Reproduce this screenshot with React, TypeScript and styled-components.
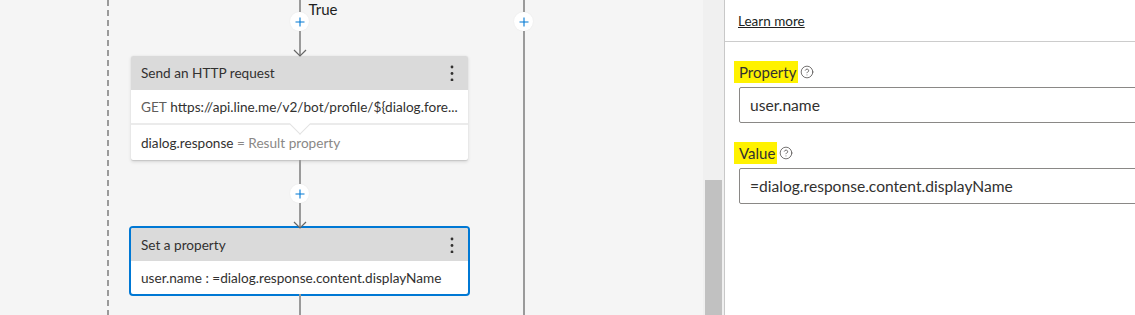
import styled, { createGlobalStyle } from 'styled-components';
import { CircleHelp } from 'lucide-react';

const GlobalStyle = createGlobalStyle`
  html, body {
    margin: 0;
    padding: 0;
  }
  body {
    font-family: Lato, "Open Sans", sans-serif;
    background: #f5f5f5;
    color: #323130;
  }
`;

const LINE = '#9a9a9a';

const Page = styled.div`
  display: flex;
  width: 1135px;
  height: 315px;
  overflow: hidden;
`;

const Canvas = styled.div`
  display: flex;
  flex: none;
  width: 703px;
  height: 100%;
  background: #f5f5f5;
`;

const DashedRail = styled.div`
  flex: none;
  width: 2px;
  margin-left: 107px;
  height: 100%;
  background: repeating-linear-gradient(to bottom, ${LINE} 0 6px, transparent 6px 10px);
`;

const Branch = styled.div<{ $width: number; $offset: number }>`
  display: flex;
  flex-direction: column;
  align-items: center;
  flex: none;
  width: ${p => p.$width}px;
  margin-left: ${p => p.$offset}px;
  height: 100%;
`;

const Segment = styled.div<{ $h?: number }>`
  position: relative;
  width: 2px;
  background: ${LINE};
  flex: ${p => (p.$h ? `0 0 ${p.$h}px` : '1 1 auto')};
`;

const ArrowHead = styled.svg`
  position: absolute;
  left: -6px;
  bottom: -1px;
`;

const BranchLabel = styled.span`
  position: absolute;
  left: 10px;
  top: 2px;
  font-size: 15px;
  line-height: 15px;
  color: #201f1e;
  white-space: nowrap;
`;

const AddButton = styled.div`
  flex: none;
  width: 19px;
  height: 19px;
  border-radius: 50%;
  background: #ffffff;
  display: flex;
  align-items: center;
  justify-content: center;
  box-shadow: 0 0 2px rgba(0, 0, 0, 0.06);
`;

const Card = styled.div<{ $selected?: boolean }>`
  flex: none;
  width: 337px;
  background: #ffffff;
  border-radius: 2px;
  box-shadow: ${p =>
    p.$selected
      ? '0 0 0 2px #0078d4'
      : '0 1.6px 3.6px rgba(0, 0, 0, 0.12), 0 0.3px 0.9px rgba(0, 0, 0, 0.1)'};
`;

const CardHeader = styled.div<{ $h: number }>`
  display: flex;
  align-items: center;
  justify-content: space-between;
  height: ${p => p.$h}px;
  padding: 0 14px 0 10px;
  background: #dadada;
  border-radius: 2px 2px 0 0;
  font-size: 13.6px;
  color: #323130;
`;

const CardRow = styled.div<{ $h: number }>`
  display: flex;
  align-items: center;
  height: ${p => p.$h}px;
  padding: 0 10px;
  font-size: 13.6px;
  white-space: nowrap;
  overflow: hidden;
  color: #323130;
`;

const Muted = styled.span<{ $tone?: string }>`
  color: ${p => p.$tone ?? '#605e5c'};
`;

const RowDivider = styled.div`
  position: relative;
  height: 2px;
  background: #ebebeb;

  &::after {
    content: '';
    position: absolute;
    left: 50%;
    top: -7px;
    width: 15px;
    height: 15px;
    margin-left: -8px;
    background: #ffffff;
    border-right: 1px solid #e2e2e2;
    border-bottom: 1px solid #e2e2e2;
    transform: rotate(45deg) scale(0.95);
  }
`;

const ScrollTrack = styled.div`
  flex: none;
  display: flex;
  flex-direction: column;
  width: 21px;
  padding: 180px 2px 0 2px;
  box-sizing: border-box;
  background: #f0f0f0;
`;

const ScrollThumb = styled.div`
  flex: 1;
  background: #c1c1c1;
`;

const Panel = styled.div`
  flex: 1;
  display: flex;
  flex-direction: column;
  min-width: 0;
  background: #ffffff;
  border-left: 1px solid #c8c8c8;
  overflow: hidden;
`;

const PanelTop = styled.div`
  flex: none;
  display: flex;
  align-items: center;
  height: 41px;
  padding-left: 13px;
  border-bottom: 1px solid #cccccc;
`;

const LearnMore = styled.a`
  font-size: 13.5px;
  color: #201f1e;
  text-decoration: underline;
`;

const Form = styled.div`
  display: flex;
  flex-direction: column;
  gap: 19px;
  padding: 19px 0 0 14px;
`;

const Field = styled.div`
  display: flex;
  flex-direction: column;
`;

const FieldLabel = styled.div`
  display: flex;
  align-items: center;
  height: 22px;
  margin-bottom: 4px;
  font-size: 15px;
  color: #323130;
`;

const Highlight = styled.span`
  background: #fff200;
  line-height: 22px;
  padding: 0 2px 0 5px;
  margin-left: -5px;
`;

const HelpIcon = styled(CircleHelp)`
  margin-left: 2px;
  color: #4a4846;
`;

const TextInput = styled.input`
  box-sizing: border-box;
  width: 430px;
  height: 36px;
  padding: 0 10px;
  border: 1px solid #8a8886;
  border-radius: 2px;
  background: #ffffff;
  font-family: inherit;
  font-size: 15.6px;
  color: #323130;
  outline: none;
`;

function Arrow() {
  return (
    <ArrowHead width="14" height="8" viewBox="0 0 14 8">
      <path d="M1 1 L7 7 L13 1" fill="none" stroke="#666666" strokeWidth="1.2" />
    </ArrowHead>
  );
}

function Add() {
  return (
    <AddButton>
      <svg width="10" height="10" viewBox="0 0 10 10">
        <path d="M5 0.5 V9.5 M0.5 5 H9.5" stroke="#0078d4" strokeWidth="1.1" />
      </svg>
    </AddButton>
  );
}

function Kebab() {
  return (
    <svg width="4" height="16" viewBox="0 0 4 16">
      <circle cx="2" cy="2" r="1.4" fill="#323130" />
      <circle cx="2" cy="8.5" r="1.4" fill="#323130" />
      <circle cx="2" cy="15" r="1.4" fill="#323130" />
    </svg>
  );
}

function Property({ label, value }: { label: string; value: string }) {
  return (
    <Field>
      <FieldLabel>
        <Highlight>{label}</Highlight>
        <HelpIcon size={14} strokeWidth={1.3} />
      </FieldLabel>
      <TextInput readOnly defaultValue={value} />
    </Field>
  );
}

export default function App() {
  return (
    <>
      <GlobalStyle />
      <Page>
        <Canvas>
          <DashedRail />
          <Branch $width={337} $offset={22}>
            <Segment $h={12}>
              <BranchLabel>True</BranchLabel>
            </Segment>
            <Add />
            <Segment $h={25}>
              <Arrow />
            </Segment>
            <Card>
              <CardHeader $h={34}>
                Send an HTTP request
                <Kebab />
              </CardHeader>
              <CardRow $h={33}>
                <Muted>GET</Muted>&nbsp;https://api.line.me/v2/bot/profile/${'{'}dialog.fore...
              </CardRow>
              <RowDivider />
              <CardRow $h={35}>
                dialog.response&nbsp;<Muted $tone="#8a8886">= Result property</Muted>
              </CardRow>
            </Card>
            <Segment $h={24} />
            <Add />
            <Segment $h={25}>
              <Arrow />
            </Segment>
            <Card $selected>
              <CardHeader $h={33}>
                Set a property
                <Kebab />
              </CardHeader>
              <CardRow $h={33}>user.name : =dialog.response.content.displayName</CardRow>
            </Card>
            <Segment />
          </Branch>
          <Branch $width={19} $offset={46}>
            <Segment $h={12} />
            <Add />
            <Segment />
          </Branch>
        </Canvas>
        <ScrollTrack>
          <ScrollThumb />
        </ScrollTrack>
        <Panel>
          <PanelTop>
            <LearnMore href="#">Learn more</LearnMore>
          </PanelTop>
          <Form>
            <Property label="Property" value="user.name" />
            <Property label="Value" value="=dialog.response.content.displayName" />
          </Form>
        </Panel>
      </Page>
    </>
  );
}
